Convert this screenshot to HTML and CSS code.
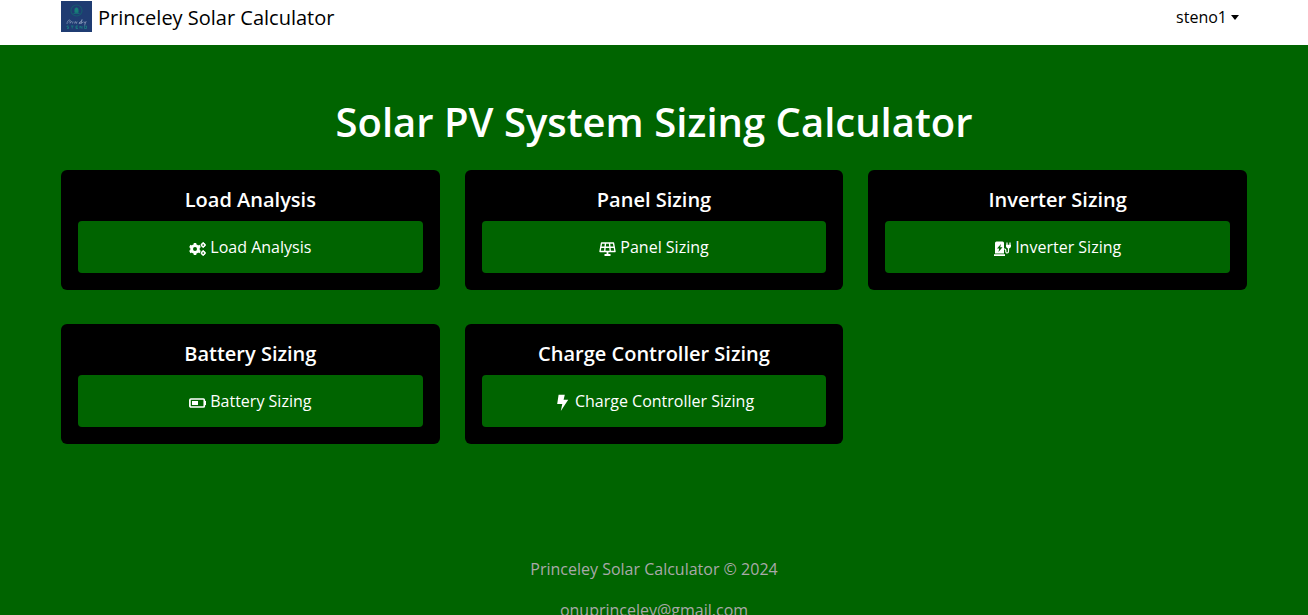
FILE: index.html
```html
<!DOCTYPE html>
<html lang="en">
<head>
<meta charset="utf-8">
<meta name="viewport" content="width=device-width, initial-scale=1">
<title>Princeley Solar Calculator</title>
<link rel="stylesheet" href="styles.css">
</head>
<body>
<header class="navbar">
  <div class="container navbar-inner">
    <a class="brand" href="#">
      <svg class="logo" viewBox="0 0 31 31" aria-hidden="true">
        <rect width="31" height="31" fill="#1f3c72"/>
        <circle cx="15.500" cy="9.500" r="5.500" fill="none" stroke="#17596f" stroke-width="1.200"/>
        <path d="M13.800 11.500V8.500a1.700 1.700 0 0 1 3.400 0v3zM12.500 12.500h6" fill="#168078" stroke="#168078" stroke-width=".6"/>
        <path d="M6 23c0-2 1-4 2.500-4s1 2-1 2.200M9 22.500l1-2 1 .5M12 20.500l-.5 2M13.500 22.500l.8-2 1 2 .8-2M18 22l1.500-1.500-1.500 2h1.500l1.500-4-.8 4 2-1.500M23 20.500l.5 1.700 1.500-1.700-1.500 4" fill="none" stroke="#8d9dbc" stroke-width=".7"/>
        <path d="M7.500 25H6v1h1.500v1.500H6M10 25h2.500M11.200 25v2.500M17 25h-2v2.500h2M15 26.200h1.500M19 27.500V25l2 2.500V25M23.500 25h2v2.500h-2z" fill="none" stroke="#1b7f80" stroke-width=".8"/>
      </svg>
      Princeley Solar Calculator
    </a>
    <button class="user-menu" type="button" aria-haspopup="true">steno1</button>
  </div>
</header>
<main class="container main">
  <h1 class="title">Solar PV System Sizing Calculator</h1>
  <div class="cards">
    <section class="card">
      <h2 class="card-title">Load Analysis</h2>
      <a class="card-button" href="#">
        <svg class="icon" viewBox="0 0 17 17" aria-hidden="true" fill="none" stroke="currentColor">
          <circle cx="6" cy="9" r="3.400" stroke-width="2.800"/>
          <path d="M6 3v2M6 13v2M.8 6l1.800 1M9.400 11l1.800 1M.8 12l1.800-1M9.400 7l1.800-1" stroke-width="2.600"/>
          <circle cx="14.200" cy="5" r="1.600" stroke-width="1.500"/>
          <circle cx="14.200" cy="13" r="1.600" stroke-width="1.500"/>
          <path d="M14.200 2.300v1M14.200 6.700v1M11.700 5h1M15.800 5h1M14.200 10.300v1M14.200 14.700v1M11.700 13h1M15.800 13h1" stroke-width="1.600"/>
        </svg>
        Load Analysis
      </a>
    </section>
    <section class="card">
      <h2 class="card-title">Panel Sizing</h2>
      <a class="card-button" href="#">
        <svg class="icon" viewBox="0 0 17 17" aria-hidden="true" fill="none" stroke="currentColor">
          <path d="M2.500 3h12l1.500 8.500H1zM1.800 7.200h13.400M6.500 3l-.8 8.500M10.500 3l.8 8.500" stroke-width="1.400" stroke-linejoin="round"/>
          <path d="M8.500 11.500V15M5.500 15h6" stroke-width="1.800"/>
        </svg>
        Panel Sizing
      </a>
    </section>
    <section class="card">
      <h2 class="card-title">Inverter Sizing</h2>
      <a class="card-button" href="#">
        <svg class="icon" viewBox="0 0 17 17" aria-hidden="true">
          <path fill="currentColor" fill-rule="evenodd" d="M1 3a1.500 1.500 0 0 1 1.500-1.500h6A1.500 1.500 0 0 1 10 3v10.500H1zM7 4 3 8.500h2.200L4.500 12l4-4.800H6.200zM0 14.300h11V16H0z"/>
          <path fill="none" stroke="currentColor" stroke-width="1.200" d="M10 9h.8c.8 0 1 .5 1 1.200v1.300c0 2 2.700 2 2.700-.2V8M13 2.500V5M16 2.500V5"/>
          <path fill="currentColor" d="M12 4.800h5V6c0 1.500-1 2.500-2.500 2.500S12 7.500 12 6z"/>
        </svg>
        Inverter Sizing
      </a>
    </section>
    <section class="card">
      <h2 class="card-title">Battery Sizing</h2>
      <a class="card-button" href="#">
        <svg class="icon" viewBox="0 0 17 17" aria-hidden="true">
          <rect x=".9" y="5" width="14.400" height="8" rx="1" fill="none" stroke="currentColor" stroke-width="1.700"/>
          <path fill="currentColor" d="M3 7h6v4H3zM15.500 7H17v4h-1.500z"/>
        </svg>
        Battery Sizing
      </a>
    </section>
    <section class="card">
      <h2 class="card-title">Charge Controller Sizing</h2>
      <a class="card-button" href="#">
        <svg class="icon" viewBox="0 0 17 17" aria-hidden="true">
          <path fill="currentColor" d="M4.600.8h6.200L9.600 5.800h4.600L6.800 17l1.500-7H3.200z"/>
        </svg>
        Charge Controller Sizing
      </a>
    </section>
  </div>
</main>
<footer class="footer">
  <p class="footer-line">Princeley Solar Calculator © 2024</p>
  <p class="footer-line">onuprinceley@gmail.com</p>
</footer>
</body>
</html>
```
FILE: styles.css
```css
* {
  box-sizing: border-box;
}

body {
  margin: 0;
  background: #006400;
  color: #fff;
  font-family: "Segoe UI", "Open Sans", "Noto Sans", sans-serif;
  font-size: 16px;
  line-height: 24px;
}

.container {
  width: 100%;
  max-width: 1210px;
  margin: 0 auto;
  padding: 0 12px;
}

.navbar {
  background: #fff;
  padding-bottom: 9px;
}

.navbar-inner {
  display: flex;
  align-items: flex-start;
  justify-content: space-between;
}

.brand {
  display: flex;
  align-items: flex-start;
  gap: 6px;
  color: #000;
  font-size: 20px;
  line-height: 36px;
  text-decoration: none;
}

.logo {
  width: 31px;
  height: 31px;
  margin-top: 1px;
}

.user-menu {
  display: flex;
  align-items: center;
  gap: 4px;
  height: 34px;
  padding: 0 8px;
  border: 0;
  background: none;
  color: #000;
  font: inherit;
}

.user-menu::after {
  content: "";
  border: 4px solid transparent;
  border-top: 5px solid #000;
  border-bottom: 0;
}

.main {
  padding-top: 50px;
}

.title {
  margin: 0 0 22px;
  font-size: 40px;
  font-weight: 600;
  line-height: 53px;
  text-align: center;
}

.cards {
  display: grid;
  grid-template-columns: repeat(3, 1fr);
  gap: 34px 25px;
}

.card {
  padding: 17px;
  border-radius: 6px;
  background: #000;
  text-align: center;
}

.card-title {
  margin: 0 0 8px;
  font-size: 20px;
  font-weight: 600;
  line-height: 26px;
}

.card-button {
  display: flex;
  align-items: center;
  justify-content: center;
  gap: 4px;
  height: 52px;
  border-radius: 4px;
  background: #006400;
  color: #fff;
  text-decoration: none;
}

.icon {
  width: 17px;
  height: 17px;
  margin-top: 3px;
}

.footer {
  margin-top: 113px;
  color: #a9a9a9;
  text-align: center;
}

.footer-line {
  margin: 0 0 17px;
}

@media (max-width: 800px) {
  .cards {
    grid-template-columns: 1fr;
  }
}
```
